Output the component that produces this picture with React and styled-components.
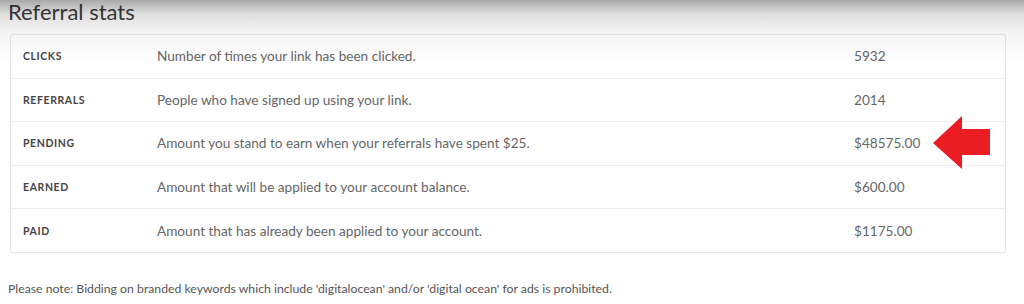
import React from "react";
import styled, { createGlobalStyle } from "styled-components";

const Global = createGlobalStyle`
  html, body { margin: 0; padding: 0; background: #fff; }
  body {
    font-family: Lato, "Open Sans", "Liberation Sans", sans-serif;
    width: 1024px;
    height: 304px;
    overflow: hidden;
    position: relative;
  }
  body::after {
    content: "";
    position: absolute;
    left: 0; top: 0; right: 0;
    height: 64px;
    pointer-events: none;
    background: linear-gradient(to bottom, rgba(0,0,0,0.34) 0%, rgba(0,0,0,0.13) 14px, rgba(0,0,0,0.045) 32px, rgba(0,0,0,0) 64px);
  }
`;

const Page = styled.div`
  padding: 0 20px 0 8px;
`;

const Title = styled.h2`
  margin: 0;
  font-size: 22px;
  line-height: 24px;
  font-weight: 400;
  color: #3d3d3d;
  height: 34px;
`;

const Table = styled.div`
  width: 994px;
  margin-left: 2px;
  border: 1px solid #e6e6e6;
  border-radius: 3px;
  background: #fff;
  box-shadow: 0 1px 2px rgba(0,0,0,0.04);
`;

const Row = styled.div`
  display: grid;
  grid-template-columns: 134px 697px 1fr;
  align-items: center;
  height: 42.6px;
  padding-left: 12px;
  border-top: ${(p) => (p.$first ? "none" : "1px solid #ededed")};
`;

const Label = styled.div`
  font-size: 10.5px;
  font-weight: 700;
  letter-spacing: 0.6px;
  color: #454545;
  text-transform: uppercase;
`;

const Desc = styled.div`
  font-size: 13.6px;
  color: #666;
`;

const Value = styled.div`
  position: relative;
  font-size: 13.6px;
  color: #666;
`;

const Arrow = styled.svg`
  position: absolute;
  left: 79px;
  top: 50%;
  margin-top: -27px;
  width: 58px;
  height: 54px;
`;

const Note = styled.p`
  margin: 28px 0 0 0;
  font-size: 12.25px;
  color: #555;
`;

const rows = [
  ["Clicks", "Number of times your link has been clicked.", "5932"],
  ["Referrals", "People who have signed up using your link.", "2014"],
  ["Pending", "Amount you stand to earn when your referrals have spent $25.", "$48575.00", true],
  ["Earned", "Amount that will be applied to your account balance.", "$600.00"],
  ["Paid", "Amount that has already been applied to your account.", "$1175.00"],
];

export default function App() {
  return (
    <Page>
      <Global />
      <Title>Referral stats</Title>
      <Table>
        {rows.map(([label, desc, value, arrow], i) => (
          <Row key={label} $first={i === 0}>
            <Label>{label}</Label>
            <Desc>{desc}</Desc>
            <Value>
              {value}
              {arrow && (
                <Arrow viewBox="0 0 58 54">
                  <polygon points="0,27 29,0 29,13 57,13 57,39 29,39 29,53" fill="#ec1c24" />
                </Arrow>
              )}
            </Value>
          </Row>
        ))}
      </Table>
      <Note>
        Please note: Bidding on branded keywords which include 'digitalocean' and/or 'digital ocean' for ads is prohibited.
      </Note>
    </Page>
  );
}
